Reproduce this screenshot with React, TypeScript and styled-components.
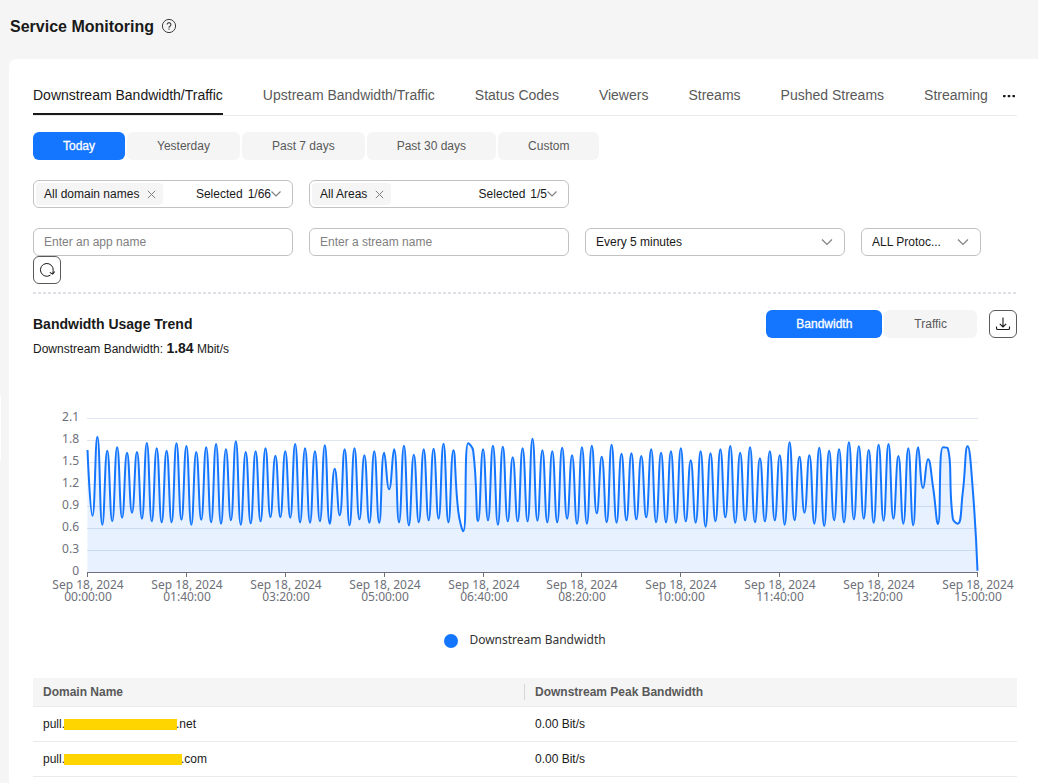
import { useLayoutEffect, useRef, useState } from "react";
import styled, { createGlobalStyle } from "styled-components";

const sans = `"Liberation Sans", Arial, sans-serif`;
const chartFont = `"Noto Sans", "Segoe UI", sans-serif`;
const blue = "#1476ff";

const GlobalStyle = createGlobalStyle`
  *, *::before, *::after { box-sizing: border-box; }
  body { margin: 0; background: #f5f5f5; color: #191919; font-family: ${sans}; font-size: 12px; line-height: 16px; }
  button, input, select { font: inherit; color: inherit; }
  button { cursor: pointer; }
  svg { display: block; }
`;

const Page = styled.div`
  min-height: 100vh;
  display: flex;
  flex-direction: column;
  padding-left: 9px;
  overflow: hidden;
`;

const PageHeader = styled.header`
  display: flex;
  align-items: center;
  gap: 7px;
  height: 59px;
  padding: 0 1px 6px;
`;

const PageTitle = styled.h1`
  margin: 0;
  font-size: 16px;
  line-height: 24px;
`;

const HelpButton = styled.button`
  padding: 0 0 2px;
  border: 0;
  background: none;
`;

const SideHandle = styled.span`
  position: absolute;
  left: 0;
  top: 395px;
  width: 1px;
  height: 65px;
  background: #fff;
`;

const Card = styled.main`
  flex: 1;
  padding: 16px 21px 6px 24px;
  background: #fff;
  border-radius: 8px 0 0 0;
`;

const TabBar = styled.nav`
  display: flex;
  justify-content: space-between;
  height: 41px;
  border-bottom: 1px solid #ebebeb;
`;

const Tabs = styled.div`
  display: flex;
  gap: 40px;
`;

const Tab = styled.button<{ $active?: boolean }>`
  height: 40px;
  padding: 2px 0 0;
  border: 0;
  border-bottom: 2px solid ${(p) => (p.$active ? "#191919" : "transparent")};
  background: none;
  color: ${(p) => (p.$active ? "#191919" : "#595959")};
  font-size: 14px;
  white-space: nowrap;
`;

const MoreButton = styled.button`
  width: 14px;
  padding: 2px 0 0;
  border: 0;
  background: none;
`;

const Segments = styled.div`
  display: flex;
  gap: 2px;
`;

const Segment = styled.button<{ $active?: boolean }>`
  height: 28px;
  padding: 0 30px;
  border: 0;
  border-radius: 6px;
  background: ${(p) => (p.$active ? blue : "#f5f5f5")};
  color: ${(p) => (p.$active ? "#fff" : "#595959")};
  -webkit-text-stroke: ${(p) => (p.$active ? "0.3px #fff" : "0")};
  white-space: nowrap;
`;

const RangeRow = styled.div`
  margin: 16px 0 20px;
`;

const Filters = styled.div`
  display: flex;
  flex-direction: column;
  gap: 20px;
`;

const FilterRow = styled.div`
  display: flex;
  flex-wrap: wrap;
  column-gap: 16px;
`;

const Field = styled.div<{ $small?: boolean }>`
  display: flex;
  align-items: center;
  position: relative;
  width: ${(p) => (p.$small ? 120 : 260)}px;
  height: 28px;
  border: 1px solid #c2c2c2;
  border-radius: 6px;
`;

const Chip = styled.span`
  display: flex;
  align-items: center;
  gap: 8px;
  height: 22px;
  margin-left: 2px;
  padding: 0 7px 0 8px;
  border-radius: 4px;
  background: #f5f5f5;
`;

const ChipRemove = styled.button`
  padding: 0;
  border: 0;
  background: none;
`;

const Picker = styled.button`
  display: flex;
  align-items: center;
  margin-left: auto;
  padding: 0 10px 0 0;
  border: 0;
  background: none;
`;

const PickerLabel = styled.span`
  margin-right: 5px;
`;

const TextInput = styled.input`
  width: 100%;
  height: 26px;
  padding: 0 10px;
  border: 0;
  border-radius: 6px;
  background: none;
  outline: none;
  &::placeholder { color: #808080; opacity: 1; }
`;

const Select = styled.select`
  appearance: none;
  width: 100%;
  height: 26px;
  padding: 0 30px 0 10px;
  border: 0;
  border-radius: 6px;
  background: none;
  outline: none;
`;

const SelectArrow = styled.span`
  position: absolute;
  right: 11px;
  pointer-events: none;
`;

const IconButton = styled.button`
  display: flex;
  align-items: center;
  justify-content: center;
  width: 28px;
  height: 28px;
  padding: 0;
  border: 1px solid #595959;
  border-radius: 6px;
  background: #fff;
`;

const Divider = styled.hr`
  height: 2px;
  margin: 8px 0 16px;
  border: 0;
  background: repeating-linear-gradient(90deg, #dfe1e6 0 3px, transparent 3px 5px);
`;

const TrendHeader = styled.div`
  display: flex;
  align-items: center;
  justify-content: space-between;
`;

const TrendTitle = styled.h2`
  margin: 0;
  font-size: 14px;
  line-height: 20px;
`;

const TrendActions = styled.div`
  display: flex;
  gap: 12px;
`;

const Summary = styled.p`
  margin: 2px 0 37px;
  line-height: 18px;
`;

const SummaryValue = styled.strong`
  font-size: 14px;
  line-height: 14px;
`;

const ChartBox = styled.div`
  height: 237px;
  overflow: hidden;
`;

const AxisText = styled.text`
  font-family: ${chartFont};
  font-size: 12px;
  fill: #6e7079;
`;

const Legend = styled.div`
  display: flex;
  align-items: center;
  justify-content: center;
  gap: 11px;
  margin-bottom: 28px;
  color: #333;
  font-family: ${chartFont};
  line-height: 18px;
`;

const LegendLabel = styled.span`
  padding-bottom: 2px;
  line-height: 16px;
`;

const Dot = styled.span`
  width: 14px;
  height: 14px;
  border-radius: 50%;
  background: ${blue};
`;

const Table = styled.table`
  width: 100%;
  border-spacing: 0;
  table-layout: fixed;
`;

const HeadCell = styled.th`
  position: relative;
  height: 29px;
  padding: 0 10px;
  border-bottom: 1px solid #ebebeb;
  background: #f5f5f5;
  color: #595959;
  text-align: left;
  & + &::before {
    content: "";
    position: absolute;
    left: -1px;
    top: 6px;
    height: 16px;
    border-left: 1px solid #d6d6d6;
  }
`;

const Cell = styled.td`
  height: 35px;
  padding: 0 10px;
  border-bottom: 1px solid #ebebeb;
`;

const Domain = styled.span`
  display: flex;
  align-items: center;
`;

const Redaction = styled.span<{ $w: number }>`
  width: ${(p) => p.$w}px;
  height: 11px;
  margin: 0 -1px;
  background: #ffd500;
`;

const HelpIcon = () => (
  <svg width="16" height="16" viewBox="0 0 16 16" fill="none" stroke="#3d3d3d">
    <circle cx="8" cy="8" r="6.6" />
    <path d="M6.1 6.6a1.9 1.9 0 1 1 2.9 1.6c-.7.4-1 .7-1 1.3v.2M8 10.6v1.1" strokeWidth="1.1" />
  </svg>
);

const CloseIcon = () => (
  <svg width="9" height="9" viewBox="0 0 9 9" stroke="#808080">
    <path d="M.8.8l7.4 7.4M8.2.8.8 8.2" />
  </svg>
);

const ChevronIcon = () => (
  <svg width="12" height="8" viewBox="0 0 12 8" fill="none" stroke="#808080" strokeWidth="1.2">
    <path d="M1 1.5l5 5 5-5" />
  </svg>
);

const SmallChevronIcon = () => (
  <svg width="11" height="8" viewBox="0 0 11 8" fill="none" stroke="#808080" strokeWidth="1.2">
    <path d="M.5 1.5 5 6l4.5-4.5" />
  </svg>
);

const MoreIcon = () => (
  <svg width="14" height="4" viewBox="0 0 14 4" fill="#191919">
    <rect x="0" y="1" width="2.6" height="2.2" rx=".6" />
    <rect x="4.7" y="1" width="2.6" height="2.2" rx=".6" />
    <rect x="9.4" y="1" width="2.6" height="2.2" rx=".6" />
  </svg>
);

const RefreshIcon = () => (
  <svg width="16" height="16" viewBox="0 0 16 16" fill="none" stroke="#191919">
    <path d="M11.4 13.2A6.4 6.4 0 1 1 14.2 8.6L13.8 11.6" />
    <path d="M10.8 10.4l2.9 1.7 2-2.5" strokeWidth="1.1" />
  </svg>
);

const DownloadIcon = () => (
  <svg width="16" height="16" viewBox="0 0 16 16" fill="none" stroke="#191919" strokeWidth="1.1">
    <path d="M8 1.5v9.5M4.8 7.8 8 11l3.2-3.2M1.5 10.5v1.7c0 .8.5 1.3 1.3 1.3h10.4c.8 0 1.3-.5 1.3-1.3v-1.7" />
  </svg>
);

// One sample every 5 minutes, in 1/220 Mbit/s steps below the 516 baseline.
const samples = [
  150, 347, 110, 374, 152, 364, 142, 353, 158, 338, 156, 356, 129, 364, 145, 367, 152, 367, 130, 359,
  138, 374, 156, 359, 142, 367, 132, 371, 148, 361, 124, 374, 156, 370, 154, 364, 145, 351, 167, 351,
  154, 353, 132, 367, 145, 368, 154, 364, 136, 371, 206, 346, 148, 376, 145, 358, 166, 368, 154, 368,
  158, 268, 148, 367, 137, 376, 164, 367, 148, 361, 146, 356, 131, 367, 151, 335, 394, 130, 152, 363,
  148, 361, 137, 374, 140, 364, 172, 364, 145, 364, 116, 362, 151, 367, 154, 367, 143, 356, 166, 371,
  142, 371, 137, 340, 170, 367, 134, 368, 161, 361, 160, 358, 168, 352, 148, 367, 158, 367, 154, 368,
  145, 364, 181, 368, 154, 380, 160, 364, 148, 352, 138, 368, 158, 361, 142, 367, 175, 364, 154, 361,
  166, 374, 127, 361, 170, 338, 166, 371, 143, 378, 152, 361, 148, 367, 127, 358, 139, 356, 150, 368,
  134, 362, 132, 356, 168, 371, 145, 376, 142, 264, 178, 260, 372, 142, 145, 355, 371, 280, 139, 260,
  512,
].map((s) => (516 - s) / 220);

const yLabels = ["2.1", "1.8", "1.5", "1.2", "0.9", "0.6", "0.3", "0"];
const xLabels = [
  "00:00:00", "01:40:00", "03:20:00", "05:00:00", "06:40:00",
  "08:20:00", "10:00:00", "11:40:00", "13:20:00", "15:00:00",
];

type Point = { x: number; y: number };

const clamp = (v: number, a: number, b: number) =>
  Math.max(Math.min(a, b), Math.min(Math.max(a, b), v));

// Cubic curve through all points, with handles kept inside each segment.
function smoothPath(pts: Point[]) {
  let d = `M${pts[0].x} ${pts[0].y}`;
  let c0 = pts[0];
  for (let i = 1; i < pts.length; i++) {
    const p = pts[i];
    const prev = pts[i - 1];
    const next = pts[i + 1];
    let c1 = p;
    let c2 = p;
    if (next) {
      const lp = Math.hypot(p.x - prev.x, p.y - prev.y);
      const ln = Math.hypot(next.x - p.x, next.y - p.y);
      const k = (0.5 * ln) / (ln + lp);
      c2 = {
        x: clamp(p.x + (next.x - prev.x) * k, p.x, next.x),
        y: clamp(p.y + (next.y - prev.y) * k, p.y, next.y),
      };
      c1 = {
        x: clamp(p.x - ((c2.x - p.x) * lp) / ln, p.x, prev.x),
        y: clamp(p.y - ((c2.y - p.y) * lp) / ln, p.y, prev.y),
      };
      c2 = {
        x: p.x + ((p.x - c1.x) * ln) / lp,
        y: p.y + ((p.y - c1.y) * ln) / lp,
      };
    }
    d += `C${[c0.x, c0.y, c1.x, c1.y, p.x, p.y].map((n) => n.toFixed(2)).join(" ")}`;
    c0 = c2;
  }
  return d;
}

function BandwidthChart() {
  const box = useRef<HTMLDivElement>(null);
  const [width, setWidth] = useState(984);

  useLayoutEffect(() => {
    const el = box.current;
    if (!el) return;
    const measure = () => setWidth(el.clientWidth);
    measure();
    const observer = new ResizeObserver(measure);
    observer.observe(el);
    return () => observer.disconnect();
  }, []);

  const left = 54;
  const right = width - 40;
  const top = 23;
  const base = 177;
  const step = (right - left) / (samples.length - 1);
  const pts = samples.map((v, i) => ({ x: left + 0.5 + i * step, y: base - (v * 22) / 0.3 }));
  const line = smoothPath(pts);

  return (
    <ChartBox ref={box}>
      <svg width={width} height="229" role="img" aria-label="Downstream bandwidth over time">
        {yLabels.map((label, i) => (
          <g key={label}>
            {label !== "0" && (
              <path d={`M${left} ${top + i * 22 + 0.5}H${right + 1}`} stroke="#e0e6f1" />
            )}
            <AxisText x={left - 8} y={top + i * 22 + 3} textAnchor="end">{label}</AxisText>
          </g>
        ))}
        <path d={`${line}V${base}H${left + 0.5}Z`} fill={blue} fillOpacity="0.1" />
        <path d={`M${left} ${base + 0.5}H${right + 1}`} stroke="#6e7079" />
        {xLabels.map((label, i) => {
          const x = Math.round(left + ((right - left) * i) / 9);
          return (
            <g key={label}>
              <path d={`M${x + 0.5} ${base}v5`} stroke="#6e7079" />
              <AxisText x={x + 1} y={base + 17} textAnchor="middle">Sep 18, 2024</AxisText>
              <AxisText x={x + 1} y={base + 29} textAnchor="middle">{label}</AxisText>
            </g>
          );
        })}
        <path d={line} fill="none" stroke={blue} strokeWidth="2" strokeLinejoin="bevel" />
      </svg>
    </ChartBox>
  );
}

const tabs = [
  "Downstream Bandwidth/Traffic", "Upstream Bandwidth/Traffic", "Status Codes",
  "Viewers", "Streams", "Pushed Streams", "Streaming",
];
const ranges = ["Today", "Yesterday", "Past 7 days", "Past 30 days", "Custom"];
const rows = [
  { tail: ".net", mask: 113, value: "0.00 Bit/s" },
  { tail: ".com", mask: 118, value: "0.00 Bit/s" },
];

function MultiSelect({ chip, count }: { chip: string; count: string }) {
  return (
    <Field>
      <Chip>
        {chip}
        <ChipRemove aria-label={`Remove ${chip}`}><CloseIcon /></ChipRemove>
      </Chip>
      <Picker>
        <PickerLabel>Selected</PickerLabel>
        {count}
        <SmallChevronIcon />
      </Picker>
    </Field>
  );
}

export default function App() {
  return (
    <Page>
      <GlobalStyle />
      <SideHandle />
      <PageHeader>
        <PageTitle>Service Monitoring</PageTitle>
        <HelpButton aria-label="Help"><HelpIcon /></HelpButton>
      </PageHeader>
      <Card>
        <TabBar>
          <Tabs>
            {tabs.map((t, i) => <Tab key={t} $active={i === 0}>{t}</Tab>)}
          </Tabs>
          <MoreButton aria-label="More tabs"><MoreIcon /></MoreButton>
        </TabBar>
        <RangeRow>
          <Segments>
            {ranges.map((r, i) => <Segment key={r} $active={i === 0}>{r}</Segment>)}
          </Segments>
        </RangeRow>
        <Filters>
          <FilterRow>
            <MultiSelect chip="All domain names" count="1/66" />
            <MultiSelect chip="All Areas" count="1/5" />
          </FilterRow>
          <FilterRow>
            <Field><TextInput aria-label="App name" placeholder="Enter an app name" /></Field>
            <Field><TextInput aria-label="Stream name" placeholder="Enter a stream name" /></Field>
            <Field>
              <Select aria-label="Interval"><option>Every 5 minutes</option></Select>
              <SelectArrow><ChevronIcon /></SelectArrow>
            </Field>
            <Field $small>
              <Select aria-label="Protocol"><option>ALL Protoc...</option></Select>
              <SelectArrow><ChevronIcon /></SelectArrow>
            </Field>
            <IconButton aria-label="Refresh"><RefreshIcon /></IconButton>
          </FilterRow>
        </Filters>
        <Divider />
        <TrendHeader>
          <TrendTitle>Bandwidth Usage Trend</TrendTitle>
          <TrendActions>
            <Segments>
              <Segment $active>Bandwidth</Segment>
              <Segment>Traffic</Segment>
            </Segments>
            <IconButton aria-label="Download"><DownloadIcon /></IconButton>
          </TrendActions>
        </TrendHeader>
        <Summary>Downstream Bandwidth: <SummaryValue>1.84</SummaryValue> Mbit/s</Summary>
        <BandwidthChart />
        <Legend><Dot /><LegendLabel>Downstream Bandwidth</LegendLabel></Legend>
        <Table>
          <thead>
            <tr>
              <HeadCell scope="col">Domain Name</HeadCell>
              <HeadCell scope="col">Downstream Peak Bandwidth</HeadCell>
            </tr>
          </thead>
          <tbody>
            {rows.map((r) => (
              <tr key={r.tail}>
                <Cell><Domain>pull.<Redaction $w={r.mask} />{r.tail}</Domain></Cell>
                <Cell>{r.value}</Cell>
              </tr>
            ))}
          </tbody>
        </Table>
      </Card>
    </Page>
  );
}
